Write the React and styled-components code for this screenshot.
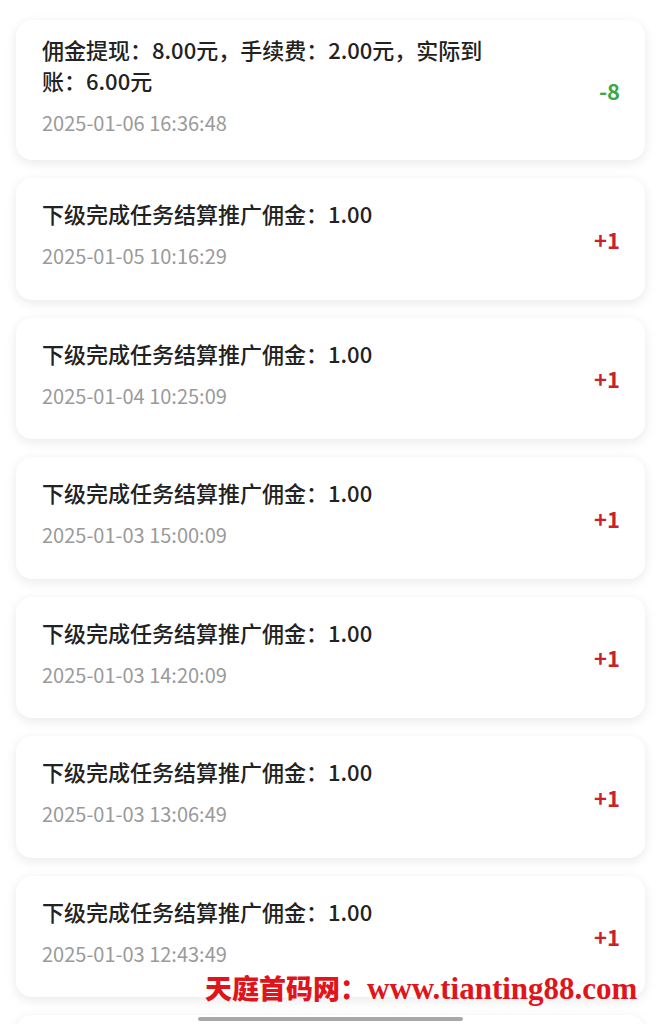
import React from 'react'
import styled, { createGlobalStyle } from 'styled-components'

const GlobalStyle = createGlobalStyle`
  html, body {
    margin: 0;
    padding: 0;
    background: #ffffff;
    font-family: "Noto Sans CJK SC", "Noto Sans", sans-serif;
  }
  * { box-sizing: border-box; }
`

const records = [
  { id: 1, title: '佣金提现：8.00元，手续费：2.00元，实际到账：6.00元', time: '2025-01-06 16:36:48', amount: '-8', out: true },
  { id: 2, title: '下级完成任务结算推广佣金：1.00', time: '2025-01-05 10:16:29', amount: '+1' },
  { id: 3, title: '下级完成任务结算推广佣金：1.00', time: '2025-01-04 10:25:09', amount: '+1' },
  { id: 4, title: '下级完成任务结算推广佣金：1.00', time: '2025-01-03 15:00:09', amount: '+1' },
  { id: 5, title: '下级完成任务结算推广佣金：1.00', time: '2025-01-03 14:20:09', amount: '+1' },
  { id: 6, title: '下级完成任务结算推广佣金：1.00', time: '2025-01-03 13:06:49', amount: '+1' },
  { id: 7, title: '下级完成任务结算推广佣金：1.00', time: '2025-01-03 12:43:49', amount: '+1' },
  { id: 8, title: '下级完成任务结算推广佣金：1.00', time: '2025-01-03 12:20:09', amount: '+1' },
]

const App = () => {
  return (
    <>
      <GlobalStyle />
      <Page>
        <List>
          {records.map((item) => (
            <Card key={item.id}>
              <Info>
                <Title>{item.title}</Title>
                <Time>{item.time}</Time>
              </Info>
              <Amount $out={item.out}>{item.amount}</Amount>
            </Card>
          ))}
        </List>
        <Watermark>
          天庭首码网：<WatermarkUrl>www.tianting88.com</WatermarkUrl>
        </Watermark>
        <HomeBar />
      </Page>
    </>
  )
}

const Page = styled.div`
  position: relative;
  width: 661px;
  height: 1024px;
  overflow: hidden;
  background: #ffffff;
`
const List = styled.div`
  display: flex;
  flex-direction: column;
  gap: 18px;
  padding: 20px 16px;
`
const Card = styled.div`
  display: flex;
  align-items: center;
  min-height: 121.5px;
  padding: 14px 25px 24px 26px;
  background: #ffffff;
  border-radius: 16px;
  box-shadow: 0 3px 12px rgba(0, 0, 0, 0.09);
`
const Info = styled.div`
  flex: 1;
  display: flex;
  flex-direction: column;
`
const Title = styled.p`
  margin: 0;
  max-width: 448px;
  font-size: 22px;
  line-height: 31px;
  font-weight: 500;
  color: #222222;
`
const Time = styled.p`
  margin: 14px 0 0;
  font-size: 20px;
  line-height: 26px;
  color: #9a9a9a;
`
const Amount = styled.span`
  margin-top: 10px;
  font-size: 22px;
  font-weight: 700;
  color: ${({ $out }) => ($out ? '#3aa846' : '#c8222b')};
`
const Watermark = styled.div`
  position: absolute;
  left: 205px;
  top: 968px;
  font-family: "Noto Sans CJK SC", sans-serif;
  font-size: 27px;
  font-weight: 900;
  line-height: 40px;
  color: #e0151b;
  white-space: nowrap;
`
const WatermarkUrl = styled.span`
  font-family: "Liberation Serif", serif;
  font-size: 31px;
  font-weight: 700;
`
const HomeBar = styled.div`
  position: absolute;
  left: 198px;
  bottom: 3px;
  width: 265px;
  height: 4px;
  border-radius: 2px;
  background: #a8a8a8;
`

export default App
